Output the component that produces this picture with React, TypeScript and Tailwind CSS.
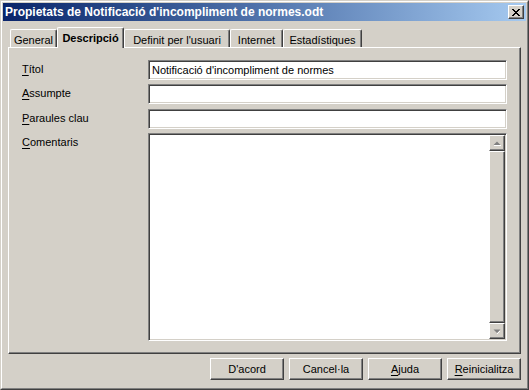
import React from "react";

const font = { fontFamily: '"Liberation Sans", Arial, sans-serif' };

function U({ children }: { children: React.ReactNode }) {
  return <span className="underline underline-offset-[2px]">{children}</span>;
}

function Tab({ label, w, selected }: { label: string; w: string; selected?: boolean }) {
  if (selected) {
    return (
      <div
        className={`${w} relative z-10 -mb-px flex h-[21px] items-start justify-center rounded-t-[2px] border-l border-t border-r border-white border-r-[#404040] bg-[#D4D0C8] pt-[3px] text-[11px] font-bold leading-[14px] text-black shadow-[inset_-1px_0_0_#808080]`}
      >
        {label}
      </div>
    );
  }
  return (
    <div
      className={`${w} flex h-[18px] items-start justify-center rounded-t-[2px] border-l border-t border-r border-white border-r-[#404040] pt-[3px] text-[11px] leading-[14px] text-black shadow-[inset_-1px_0_0_#808080]`}
    >
      {label}
    </div>
  );
}

function Field({ value }: { value?: string }) {
  return (
    <div className="h-[20px] w-[359px] border-l border-t border-r border-b border-[#808080] border-r-white border-b-white bg-white pl-[2px] text-[11px] leading-[16px] text-black shadow-[inset_1px_1px_0_#404040,inset_-1px_-1px_0_#D4D0C8]">
      <div className="pl-px pt-px">{value}</div>
    </div>
  );
}

function ArrowUp() {
  return (
    <svg width="8" height="5" viewBox="0 0 8 5" className="block">
      <polygon points="4,0.5 7.5,4 0.5,4" fill="#808080" />
      <rect x="1" y="4" width="7" height="1" fill="#ffffff" />
    </svg>
  );
}
function ArrowDown() {
  return (
    <svg width="8" height="5" viewBox="0 0 8 5" className="block">
      <polygon points="0.5,0.5 7.5,0.5 4,4" fill="#808080" />
      <rect x="4" y="4" width="1" height="1" fill="#ffffff" />
      <rect x="5" y="3" width="1" height="1" fill="#ffffff" />
      <rect x="6" y="2" width="1" height="1" fill="#ffffff" />
    </svg>
  );
}

const raised =
  "border-l border-t border-r border-b border-white border-r-[#404040] border-b-[#404040] bg-[#D4D0C8] shadow-[inset_-1px_-1px_0_#808080]";

function Button({ children }: { children: React.ReactNode }) {
  return (
    <div className={`flex h-[22px] w-[74px] items-center justify-center text-[11px] leading-[14px] text-black ${raised}`}>
      {children}
    </div>
  );
}

export default function App() {
  return (
    <div className="h-[390px] w-[529px] bg-[#D4D0C8]" style={font}>
      <div className="h-full w-full border-l border-t border-r border-b border-[#D4D0C8] border-r-[#404040] border-b-[#404040]">
        <div className="flex h-full w-full flex-col border-l border-t border-r border-b border-white border-r-[#808080] border-b-[#808080] p-px">
          {/* Title bar */}
          <div className="flex h-[18px] items-center bg-linear-to-r from-[#0A246A] to-[#A6CAF0] pl-[2px] pr-[2px]">
            <div className="flex-1 text-[12px] font-bold leading-[14px] text-white">
              Propietats de Notificació d'incompliment de normes.odt
            </div>
            <div className={`flex h-[14px] w-[16px] items-center justify-center ${raised}`}>
              <svg width="8" height="7" viewBox="0 0 8 7" className="block">
                <path d="M0 0h2v1h-2zM6 0h2v1h-2zM1 1h2v1h-2zM5 1h2v1h-2zM2 2h4v1h-4zM3 3h2v1h-2zM2 4h4v1h-4zM1 5h2v1h-2zM5 5h2v1h-2zM0 6h2v1h-2zM6 6h2v1h-2z" fill="#000" />
              </svg>
            </div>
          </div>

          {/* Body */}
          <div className="flex flex-1 flex-col px-[5px] pt-[6px]">
            <div className="flex h-[20px] items-end pl-[2px]">
              <Tab label="General" w="w-[47px]" />
              <Tab label="Descripció" w="w-[67px]" selected />
              <Tab label="Definit per l'usuari" w="w-[106px]" />
              <Tab label="Internet" w="w-[53px]" />
              <Tab label="Estadístiques" w="w-[79px]" />
            </div>
            <div className="flex h-[307px] flex-col border-l border-t border-r border-b border-white border-r-[#404040] border-b-[#404040] pl-[13px] pr-[12px] pt-[12px] shadow-[inset_-1px_-1px_0_#808080]">
              <div className="flex items-start">
                <div className="h-[20px] w-[126px] pt-[2px] text-[11px] leading-[14px] text-black">
                  <U>T</U>ítol
                </div>
                <Field value="Notificació d'incompliment de normes" />
              </div>
              <div className="mt-[4px] flex items-start">
                <div className="h-[20px] w-[126px] pt-[2px] text-[11px] leading-[14px] text-black">
                  <U>A</U>ssumpte
                </div>
                <Field />
              </div>
              <div className="mt-[5px] flex items-start">
                <div className="h-[20px] w-[126px] pt-[2px] text-[11px] leading-[14px] text-black">
                  <U>P</U>araules clau
                </div>
                <Field />
              </div>
              <div className="mt-[4px] flex items-start">
                <div className="h-[20px] w-[126px] pt-[2px] text-[11px] leading-[14px] text-black">
                  <U>C</U>omentaris
                </div>
                <div className="flex h-[208px] w-[359px] justify-end border-l border-t border-r border-b border-[#808080] border-r-white border-b-white bg-white p-px shadow-[inset_1px_1px_0_#404040,inset_-1px_-1px_0_#D4D0C8]">
                  <div className="flex w-[16px] flex-col">
                    <div className={`flex h-[16px] items-center justify-center ${raised}`}>
                      <ArrowUp />
                    </div>
                    <div className={`flex-1 ${raised}`} />
                    <div className={`flex h-[16px] items-center justify-center ${raised}`}>
                      <ArrowDown />
                    </div>
                  </div>
                </div>
              </div>
            </div>

            <div className="mt-[4px] flex justify-end gap-[5px]">
              <Button>D'acord</Button>
              <Button>Cancel·la</Button>
              <Button>
                <U>A</U>juda
              </Button>
              <Button>
                <U>R</U>einicialitza
              </Button>
            </div>
          </div>
        </div>
      </div>
    </div>
  );
}
